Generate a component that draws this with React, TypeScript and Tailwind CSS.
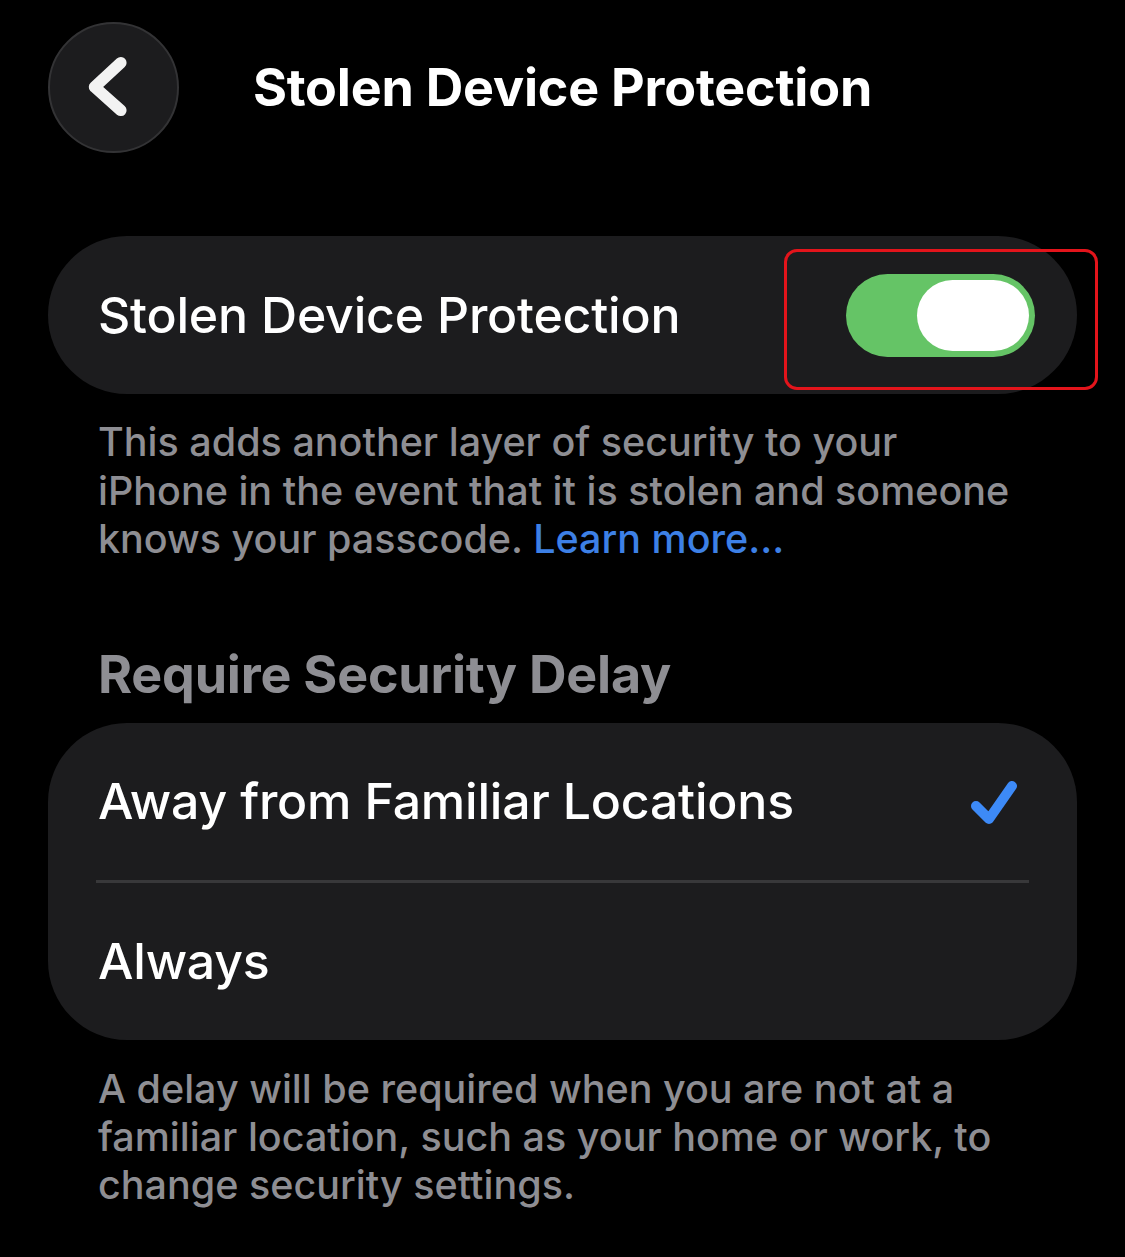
import React from 'react';

const font = { fontFamily: 'Inter, "Noto Sans", sans-serif' };

const BackButton: React.FC = () => (
    <button className="w-[131px] h-[131px] rounded-full bg-[#1c1c1e] border-2 border-[#333335] flex items-center justify-center shrink-0">
        <svg width="131" height="131" viewBox="0 0 131 131" className="block">
            <path
                d="M73 40 L46 65 L73 89"
                fill="none"
                stroke="#f2f2f2"
                strokeWidth="12"
                strokeLinecap="round"
                strokeLinejoin="round"
            />
        </svg>
    </button>
);

const Toggle: React.FC<{ on: boolean }> = ({ on }) => (
    <div
        className={`w-[189px] h-[83px] rounded-full p-[6px] flex ${on ? 'bg-[#65c466] justify-end' : 'bg-[#39393d] justify-start'}`}
    >
        <div className="w-[112px] h-[71px] rounded-full bg-white" />
    </div>
);

const Check: React.FC = () => (
    <svg width="60" height="60" viewBox="0 0 60 60" className="block mt-[12px]">
        <path
            d="M11 29 L24 42 L47 9"
            fill="none"
            stroke="#3d8af7"
            strokeWidth="10"
            strokeLinecap="round"
            strokeLinejoin="round"
        />
    </svg>
);

export default function App() {
    return (
        <div className="w-[1125px] h-[1257px] bg-black text-white overflow-hidden" style={font}>
            {/* Nav bar */}
            <div className="relative h-[175px] pt-[22px] px-[48px]">
                <BackButton />
                <div className="absolute left-0 right-0 top-[22px] h-[131px] flex items-center justify-center pointer-events-none">
                    <h1 className="text-[52px] font-bold tracking-[-0.2px] text-white">Stolen Device Protection</h1>
                </div>
            </div>

            <div className="px-[48px] pt-[61px]">
                {/* Main toggle card */}
                <div className="relative h-[158px] rounded-[79px] bg-[#1c1c1e] flex items-center justify-between pl-[50px] pr-[42px]">
                    <span className="text-[50px] font-medium tracking-[-0.2px]">Stolen Device Protection</span>
                    <Toggle on={true} />
                    <div className="absolute left-[736px] top-[13px] w-[314px] h-[141px] border-[3.5px] border-[#e3141b] rounded-[13px]" />
                </div>

                <p className="px-[50px] pt-[24px] text-[39.5px] font-medium leading-[48.5px] text-[#8e8e93]">
                    This adds another layer of security to your<br />
                    iPhone in the event that it is stolen and someone<br />
                    knows your passcode. <span className="text-[#3d80e6]">Learn more...</span>
                </p>

                <h2 className="px-[50px] pt-[81px] text-[52px] font-bold leading-[60px] tracking-[-0.2px] text-[#8e8e93]">
                    Require Security Delay
                </h2>

                {/* Delay options */}
                <div className="mt-[18px] rounded-[79px] bg-[#1c1c1e] overflow-hidden">
                    <div className="h-[157px] flex items-center justify-between pl-[50px] pr-[52px]">
                        <span className="text-[50px] font-medium tracking-[-0.2px]">Away from Familiar Locations</span>
                        <Check />
                    </div>
                    <div className="mx-[48px] h-[3px] bg-[#38383a]" />
                    <div className="h-[157px] flex items-center pl-[50px]">
                        <span className="text-[50px] font-medium tracking-[-0.2px]">Always</span>
                    </div>
                </div>

                <p className="px-[50px] pt-[25px] text-[39.5px] font-medium leading-[48px] text-[#8e8e93]">
                    A delay will be required when you are not at a<br />
                    familiar location, such as your home or work, to<br />
                    change security settings.
                </p>
            </div>
        </div>
    );
}
